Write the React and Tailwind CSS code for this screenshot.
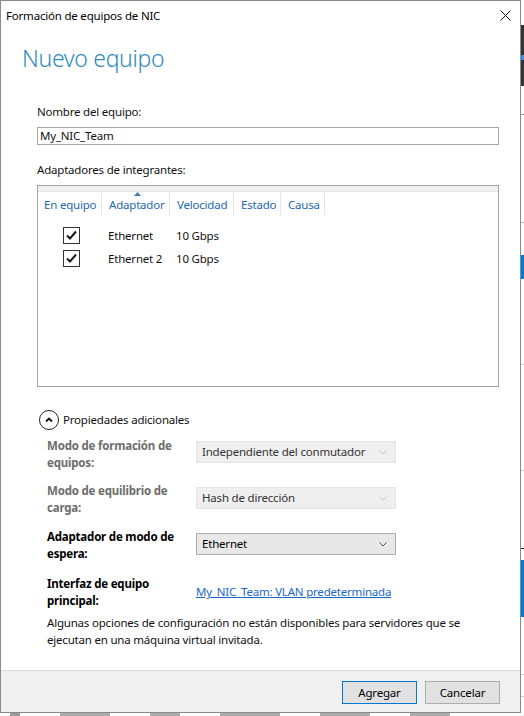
import React from 'react';

const FONT = { fontFamily: '"Segoe UI", "Noto Sans", "Liberation Sans", sans-serif' };

function Check() {
    return (
        <div className="w-[17px] h-[17px] border border-[#333] bg-white flex items-center justify-center">
            <svg width="13" height="13" viewBox="0 0 13 13">
                <path d="M2 6.5 L5 9.5 L11 2.5" fill="none" stroke="#1a1a1a" strokeWidth="2" />
            </svg>
        </div>
    );
}

function Chevron({ color }) {
    return (
        <svg width="8" height="5" viewBox="0 0 8 5">
            <path d="M0.5 0.5 L4 4 L7.5 0.5" fill="none" stroke={color} strokeWidth="1" />
        </svg>
    );
}

function Select({ value, disabled }) {
    return (
        <div
            className={`w-[200px] h-[22px] mt-[4px] flex items-center justify-between pl-[5px] pr-[8px]
                ${disabled ? 'bg-[#efefef] border border-[#e4e4e4] text-[#333]' : 'bg-[#e8e8e8] border border-[#acacac] text-black'}`}
        >
            <span>{value}</span>
            <Chevron color={disabled ? '#c4c4c4' : '#555'} />
        </div>
    );
}

const COLUMNS = [
    { label: 'En equipo', w: 'w-[64px]', pl: 'pl-[6px]' },
    { label: 'Adaptador', w: 'w-[68px]', pl: 'pl-[7px]', sorted: true },
    { label: 'Velocidad', w: 'w-[64px]', pl: 'pl-[7px]' },
    { label: 'Estado', w: 'w-[47px]', pl: 'pl-[7px]' },
    { label: 'Causa', w: 'w-[44px]', pl: 'pl-[7px]' },
];

const ADAPTERS = [
    { name: 'Ethernet', speed: '10 Gbps' },
    { name: 'Ethernet 2', speed: '10 Gbps' },
];

export default function App() {
    return (
        <div className="w-[524px] h-[716px] bg-white flex flex-col overflow-hidden text-[11.5px] tracking-[-0.2px]" style={FONT}>
            <div className="flex h-[713px]">
                {/* Dialog */}
                <div className="w-[521px] h-[713px] border border-[#8a8a8a] bg-white flex flex-col text-[#111]">
                    {/* Title bar */}
                    <div className="h-[29px] flex items-center justify-between pl-[5px] pr-[9px] shrink-0">
                        <span className="text-black">Formación de equipos de NIC</span>
                        <svg width="11" height="11" viewBox="0 0 11 11">
                            <path d="M0.5 0.5 L10.5 10.5 M10.5 0.5 L0.5 10.5" stroke="#111" strokeWidth="1" />
                        </svg>
                    </div>

                    {/* Heading */}
                    <div className="ml-[21px] mt-[12px] h-[32px] leading-[32px] text-[23px] tracking-[-0.3px] font-light text-[#2e8bc0]">
                        Nuevo equipo
                    </div>

                    <div className="ml-[36px] w-[462px] flex flex-col">
                        <div className="mt-[30px] leading-[16px]">Nombre del equipo:</div>
                        <div className="mt-[7px] h-[18px] border border-[#a8a8a8] flex items-center px-[2px] leading-[16px]">
                            My_NIC_Team
                        </div>

                        <div className="mt-[17px] leading-[16px]">Adaptadores de integrantes:</div>

                        {/* Member list */}
                        <div className="mt-[7px] h-[202px] border border-[#a3a3a3] flex flex-col">
                            <div className="h-[6px] bg-[#f0f0f0] border-b border-[#e3e3e3]"></div>
                            <div className="h-[23px] flex">
                                {COLUMNS.map(col => (
                                    <div
                                        key={col.label}
                                        className={`${col.w} ${col.pl} relative border-r border-[#e5e5e5] flex items-center pt-[2px] text-[#2467ad]`}
                                    >
                                        {col.sorted && (
                                            <svg className="absolute left-[32px] top-[0px]" width="7" height="4" viewBox="0 0 7 4">
                                                <path d="M0 4 L3.5 0 L7 4 Z" fill="#3b7fb6" />
                                            </svg>
                                        )}
                                        {col.label}
                                    </div>
                                ))}
                            </div>
                            <div className="mt-[9px] flex flex-col">
                                {ADAPTERS.map(a => (
                                    <div key={a.name} className="h-[23px] flex items-center">
                                        <div className="w-[64px] flex justify-center pl-[2px]">
                                            <Check />
                                        </div>
                                        <div className="w-[68px] pl-[6px] text-[#111]">{a.name}</div>
                                        <div className="pl-[6px] text-[#111]">{a.speed}</div>
                                    </div>
                                ))}
                            </div>
                        </div>

                        {/* Additional properties toggle */}
                        <div className="mt-[23px] h-[20px] flex items-center gap-[4px] ml-[2px]">
                            <div className="w-[20px] h-[20px] rounded-full border border-[#222] flex items-center justify-center">
                                <svg width="8" height="6" viewBox="0 0 8 6">
                                    <path d="M1 4.5 L4 1.5 L7 4.5" fill="none" stroke="#111" strokeWidth="1.8" />
                                </svg>
                            </div>
                            <span>Propiedades adicionales</span>
                        </div>
                    </div>

                    {/* Properties */}
                    <div className="ml-[46px] w-[440px] flex flex-col">
                        <div className="mt-[7px] flex">
                            <div className="w-[149px] font-bold text-[#6d6d6d] leading-[17px]">Modo de formación de equipos:</div>
                            <Select value="Independiente del conmutador" disabled />
                        </div>
                        <div className="mt-[11px] flex">
                            <div className="w-[149px] font-bold text-[#6d6d6d] leading-[17px]">Modo de equilibrio de carga:</div>
                            <div className="mt-[1px]"><Select value="Hash de dirección" disabled /></div>
                        </div>
                        <div className="mt-[12px] flex">
                            <div className="w-[149px] font-bold text-black leading-[17px]">Adaptador de modo de espera:</div>
                            <div className="mt-[1px]"><Select value="Ethernet" /></div>
                        </div>
                        <div className="mt-[13px] flex items-center">
                            <div className="w-[149px] font-bold text-black leading-[17px]">Interfaz de equipo principal:</div>
                            <span className="text-[#1a66c8] underline">My_NIC_Team: VLAN predeterminada</span>
                        </div>
                        <div className="mt-[5px] w-[430px] leading-[17px] text-[#111]">
                            Algunas opciones de configuración no están disponibles para servidores que se ejecutan en una máquina virtual invitada.
                        </div>
                    </div>

                    <div className="flex-1"></div>

                    {/* Footer */}
                    <div className="h-[42px] shrink-0 bg-[#f0f0f0] border-t border-[#dedede] flex justify-end items-start pt-[10px] pr-[20px] gap-[8px]">
                        <button className="w-[75px] h-[23px] bg-[#e1e1e1] border border-[#0078d7] text-black">
                            Agregar
                        </button>
                        <button className="w-[75px] h-[23px] bg-[#e1e1e1] border border-[#adadad] text-black">
                            Cancelar
                        </button>
                    </div>
                </div>

                {/* Background app peeking on the right */}
                <div className="w-[3px] flex flex-col bg-white">
                    <div className="h-[25px]"></div>
                    <div className="h-[30px] bg-[#333]"></div>
                    <div className="h-[5px] bg-[#3a8fd6]"></div>
                    <div className="h-[26px] bg-[#333]"></div>
                    <div className="h-[28px]"></div>
                    <div className="h-[1px] bg-[#9a9a9a]"></div>
                    <div className="h-[107px]"></div>
                    <div className="h-[1px] bg-[#b5b5b5]"></div>
                    <div className="h-[32px]"></div>
                    <div className="h-[24px] bg-[#0078d7]"></div>
                    <div className="h-[85px]"></div>
                    <div className="h-[1px] bg-[#c8c8c8]"></div>
                    <div className="h-[105px]"></div>
                    <div className="h-[1px] bg-[#c8c8c8]"></div>
                    <div className="h-[77px]"></div>
                    <div className="h-[1px] bg-[#222]"></div>
                    <div className="h-[11px]"></div>
                    <div className="h-[57px] bg-[#0078d7]"></div>
                    <div className="h-[57px]"></div>
                    <div className="h-[1px] bg-[#c8c8c8]"></div>
                    <div className="h-[21px]"></div>
                    <div className="h-[1px] bg-[#c8c8c8]"></div>
                </div>
            </div>

            {/* Background app peeking below */}
            <div className="h-[3px] flex gap-[40px] pl-[10px] overflow-hidden">
                <div className="w-[10px] bg-[#999]"></div>
                <div className="w-[50px] bg-[#aaa]"></div>
                <div className="w-[30px] bg-[#aaa]"></div>
                <div className="w-[60px] bg-[#aaa]"></div>
                <div className="w-[50px] bg-[#aaa]"></div>
                <div className="w-[40px] bg-[#aaa]"></div>
            </div>
        </div>
    );
}
